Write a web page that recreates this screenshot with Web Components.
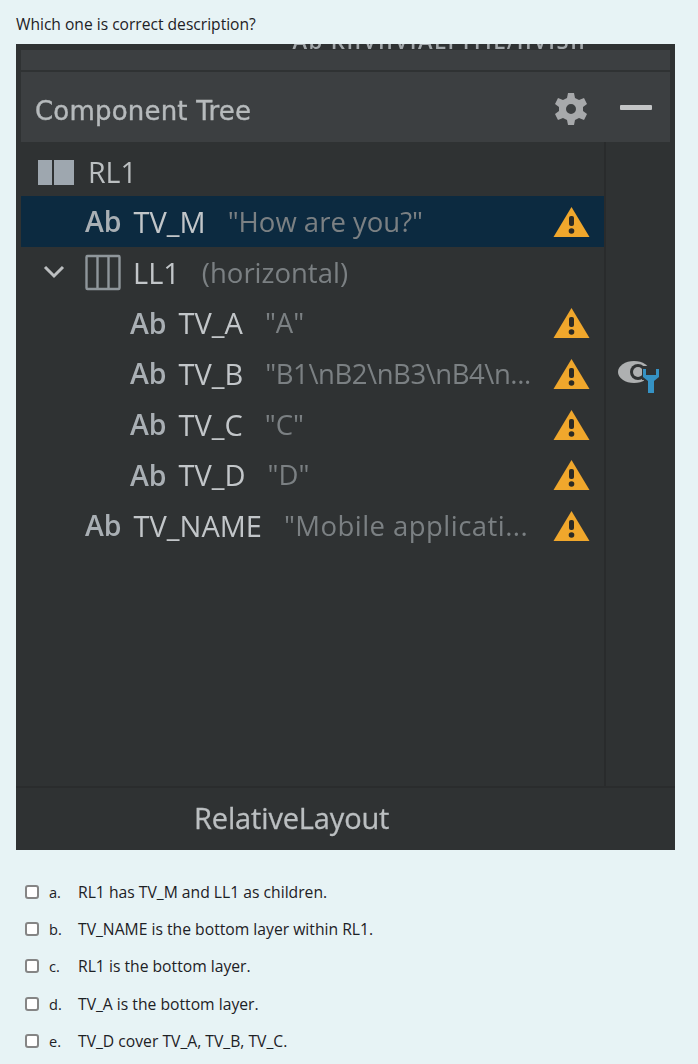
<!DOCTYPE html>
<html>
<head>
<meta charset="utf-8">
<style>
  html, body { margin: 0; background: #e7f3f5; }
  body { height: 1064px; overflow: hidden; font-family: "Open Sans", sans-serif; color: #1d2125; }
</style>
</head>
<body>
<quiz-question>
  <span slot="prompt">Which one is correct description?</span>
  <tree-panel slot="figure">
    <tree-row kind="text" indent="85" name="TV_M" detail="&quot;How are you?&quot;" selected warn></tree-row>
    <tree-row kind="linear" indent="85" name="LL1" detail="(horizontal)" expanded></tree-row>
    <tree-row kind="text" indent="130" name="TV_A" detail="&quot;A&quot;" warn></tree-row>
    <tree-row kind="text" indent="130" name="TV_B" detail="&quot;B1\nB2\nB3\nB4\n..." tracking="-.45px" warn tool></tree-row>
    <tree-row kind="text" indent="130" name="TV_C" detail="&quot;C&quot;" warn></tree-row>
    <tree-row kind="text" indent="130" name="TV_D" detail="&quot;D&quot;" warn></tree-row>
    <tree-row kind="text" indent="85" name="TV_NAME" detail="&quot;Mobile applicati..." tracking=".45px" warn></tree-row>
  </tree-panel>
  <quiz-option letter="a.">RL1 has TV_M and LL1 as children.</quiz-option>
  <quiz-option letter="b.">TV_NAME is the bottom layer within RL1.</quiz-option>
  <quiz-option letter="c.">RL1 is the bottom layer.</quiz-option>
  <quiz-option letter="d.">TV_A is the bottom layer.</quiz-option>
  <quiz-option letter="e.">TV_D cover TV_A, TV_B, TV_C.</quiz-option>
</quiz-question>

<script>
const questionTemplate = document.createElement('template');
questionTemplate.innerHTML = `
  <style>
    :host { display: block; padding: 14px 23px 0 16px; }
    .prompt { font-size: 15.6px; line-height: 20px; height: 30px; }
    .options { display: flex; flex-direction: column; padding: 23px 0 0 9px; }
  </style>
  <div class="prompt"><slot name="prompt"></slot></div>
  <slot name="figure"></slot>
  <div class="options"><slot></slot></div>
`;
class QuizQuestion extends HTMLElement {
  constructor() {
    super();
    this.attachShadow({ mode: 'open' }).appendChild(questionTemplate.content.cloneNode(true));
  }
}
customElements.define('quiz-question', QuizQuestion);

const panelTemplate = document.createElement('template');
panelTemplate.innerHTML = `
  <style>
    :host { display: block; width: 659px; height: 806px; background: #2f3233; color: #bbbfc1; overflow: hidden; font-family: "Open Sans", sans-serif; }
    .clip { height: 6px; overflow: hidden; text-align: center; padding-left: 188px; }
    .clip span { display: block; font-size: 22px; line-height: 22px; margin-top: -15px; font-weight: 600; color: #a3a8ab; letter-spacing: 1.5px; white-space: nowrap; filter: blur(.6px); }
    .band { height: 20px; margin: 0 5px; background: #3c3f41; }
    .head { height: 70px; margin: 2px 5px 0; background: #3c3f41; display: flex; align-items: center; padding: 4px 18px 0 14px; box-sizing: border-box; }
    .title { flex: 1; margin-top: 4px; font-family: "DejaVu Sans", sans-serif; font-size: 26px; letter-spacing: .2px; -webkit-text-stroke: .4px #b6babc; white-space: nowrap; color: #b6babc; filter: blur(.5px); }
    .gear { margin-right: 33px; filter: blur(.5px); }
    .minus { margin-top: -2px; filter: blur(.4px); }
    .body { display: flex; height: 644px; }
    .tree { width: 583px; margin-left: 5px; flex: none; border-right: 2px solid #292b2c; }
    .root { height: 54px; display: flex; align-items: center; padding: 6px 0 0 17px; box-sizing: border-box; gap: 13px; font-size: 28.5px; }
    .root span { filter: blur(.5px); }
    .foot { height: 62px; border-top: 2px solid #2a2c2d; display: flex; align-items: center; padding: 0 0 2px 178px; box-sizing: border-box; font-size: 29px; letter-spacing: -.15px; -webkit-text-stroke: .3px #bbbfc1; }
    .foot span { filter: blur(.5px); }
  </style>
  <div class="clip"><span>Ab KIIVIIVIALI ITIL/IIVISII</span></div>
  <div class="band"></div>
  <div class="head">
    <span class="title">Component Tree</span>
    <svg class="gear" width="32" height="36" viewBox="0 0 32 36">
      <path fill="#a7a9ab" fill-rule="evenodd" d="M13 2h6l1 5 4 2 5-2 3 6-4 3v4l4 3-3 6-5-2-4 2-1 5h-6l-1-5-4-2-5 2-3-6 4-3v-4L0 13l3-6 5 2 4-2zM16 13a5 5 0 1 0 0 10 5 5 0 0 0 0-10z"/>
    </svg>
    <svg class="minus" width="32" height="6" viewBox="0 0 32 6"><rect y="0" width="32" height="5" rx="1" fill="#c3c5c6"/></svg>
  </div>
  <div class="body">
    <div class="tree">
      <div class="root">
        <svg width="37" height="26" viewBox="0 0 37 26"><rect x="0" y="1" width="14" height="25" fill="#9ea7af"/><rect x="16" y="1" width="20" height="25" fill="#9ea7af"/></svg>
        <span>RL1</span>
      </div>
      <slot></slot>
    </div>
  </div>
  <div class="foot"><span>RelativeLayout</span></div>
`;
class TreePanel extends HTMLElement {
  constructor() {
    super();
    this.attachShadow({ mode: 'open' }).appendChild(panelTemplate.content.cloneNode(true));
  }
}
customElements.define('tree-panel', TreePanel);

const rowTemplate = document.createElement('template');
rowTemplate.innerHTML = `
  <style>
    :host { display: block; height: 50.7px; position: relative; white-space: nowrap; }
    :host([selected]) { background: #0c2a40; }
    .row { display: flex; align-items: center; height: 100%; font-size: 29px; }
    .icon { flex: none; display: flex; align-items: center; }
    .ab { font-weight: 600; font-size: 28.5px; color: #a9afb4; margin-right: 12px; filter: blur(.5px); }
    .name { color: #c2c6c9; filter: blur(.5px); }
    .detail { color: #7b8083; font-size: 27.5px; margin-left: 22px; flex: none; filter: blur(.5px); }
    .warn { position: absolute; left: 532px; top: 10px; filter: blur(.3px); }
    .tool { position: absolute; left: 597px; top: 12px; filter: blur(.4px); }
    .chev { position: absolute; left: 22px; top: 18px; }
    .linear { margin-right: 12px; }
  </style>
  <div class="row"></div>
`;
const warnIcon = `<svg class="warn" width="37" height="32" viewBox="0 0 37 32">
  <path fill="#f0a72c" d="M18.5 1 36.5 31H.5z"/>
  <rect x="16" y="10" width="5" height="10" rx="2" fill="#2b2a25"/><circle cx="18.5" cy="25" r="2.8" fill="#2b2a25"/></svg>`;
const toolIcon = `<svg class="tool" width="41" height="34" viewBox="0 0 41 34">
  <ellipse cx="16" cy="12" rx="16" ry="11" fill="#aeb0b1"/>
  <circle cx="20" cy="12" r="8" fill="#2f3233"/>
  <circle cx="20" cy="12" r="5" fill="#aeb0b1"/>
  <path fill="#2f3233" d="M24 6h17v14h-6v14h-9V20h-2z"/>
  <path fill="#3592c4" d="M25 9v8l5 4v12h6V21l5-4V9h-3v6h-10V9z"/></svg>`;
const chevIcon = `<svg class="chev" width="22" height="14" viewBox="0 0 22 14"><path d="M2 2l9 9 9-9" fill="none" stroke="#bcbfc1" stroke-width="3"/></svg>`;
const linearIcon = `<svg class="icon linear" width="36" height="37" viewBox="0 0 36 37" fill="none" stroke="#8f969b" stroke-width="2.4">
  <rect x="1.5" y="2" width="33" height="33" rx="1"/><path d="M12.5 2v33M23.5 2v33"/></svg>`;

class TreeRow extends HTMLElement {
  constructor() {
    super();
    this.attachShadow({ mode: 'open' }).appendChild(rowTemplate.content.cloneNode(true));
  }
  connectedCallback() {
    const row = this.shadowRoot.querySelector('.row');
    // panel starts at x=16, row box at x=21
    row.style.paddingLeft = (Number(this.getAttribute('indent')) - 21) + 'px';
    const icon = this.getAttribute('kind') === 'text' ? '<span class="ab">Ab</span>' : linearIcon;
    row.innerHTML = icon + '<span class="name"></span><span class="detail"></span>'
      + (this.hasAttribute('expanded') ? chevIcon : '')
      + (this.hasAttribute('warn') ? warnIcon : '')
      + (this.hasAttribute('tool') ? toolIcon : '');
    row.querySelector('.name').textContent = this.getAttribute('name');
    const detail = row.querySelector('.detail');
    detail.textContent = this.getAttribute('detail');
    if (this.hasAttribute('tracking')) detail.style.letterSpacing = this.getAttribute('tracking');
  }
}
customElements.define('tree-row', TreeRow);

const optionTemplate = document.createElement('template');
optionTemplate.innerHTML = `
  <style>
    :host { display: flex; align-items: center; height: 37.4px; font-size: 15.7px; color: #1d2125; }
    .box { width: 10px; height: 10px; border: 2px solid #858585; border-radius: 3px; background: #fff; margin-right: 10px; flex: none; }
    .letter { width: 29px; flex: none; font-size: 14.6px; }
  </style>
  <span class="box"></span><span class="letter"></span><span><slot></slot></span>
`;
class QuizOption extends HTMLElement {
  constructor() {
    super();
    this.attachShadow({ mode: 'open' }).appendChild(optionTemplate.content.cloneNode(true));
    this.shadowRoot.querySelector('.letter').textContent = this.getAttribute('letter');
  }
}
customElements.define('quiz-option', QuizOption);
</script>
</body>
</html>
